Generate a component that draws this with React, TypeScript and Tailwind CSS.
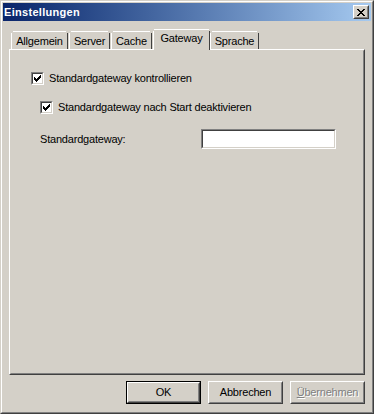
import React from "react";

const font = { fontFamily: '"Liberation Sans", Arial, sans-serif' };

function Check() {
  const px: [number, number][] = [
    [6, 0],
    [5, 1], [6, 1],
    [0, 2], [4, 2], [5, 2], [6, 2],
    [0, 3], [1, 3], [3, 3], [4, 3], [5, 3],
    [0, 4], [1, 4], [2, 4], [3, 4], [4, 4],
    [1, 5], [2, 5], [3, 5],
    [2, 6],
  ];
  return (
    <svg width="7" height="7" viewBox="0 0 7 7" shapeRendering="crispEdges">
      {px.map(([x, y], i) => (
        <rect key={i} x={x} y={y} width="1" height="1" fill="#000" />
      ))}
    </svg>
  );
}

function CheckBox() {
  return (
    <div className="w-[13px] h-[13px] border border-t-[#808080] border-l-[#808080] border-r-white border-b-white shrink-0">
      <div className="w-full h-full border border-t-[#404040] border-l-[#404040] border-r-[#d4d0c8] border-b-[#d4d0c8] bg-white flex items-center justify-center">
        <Check />
      </div>
    </div>
  );
}

function CloseX() {
  const px: [number, number][] = [];
  for (let i = 0; i < 7; i++) {
    px.push([i, i], [i + 1, i], [6 - i, i], [7 - i, i]);
  }
  return (
    <svg width="8" height="7" viewBox="0 0 8 7" shapeRendering="crispEdges">
      {px.map(([x, y], i) => (
        <rect key={i} x={x} y={y} width="1" height="1" fill="#000" />
      ))}
    </svg>
  );
}

function Btn({ children, def }: { children: React.ReactNode; def?: boolean }) {
  return (
    <div className={"w-[75px] h-[23px] " + (def ? "border border-black" : "")}>
      <div className="w-full h-full border border-t-white border-l-white border-r-[#404040] border-b-[#404040]">
        <div className="w-full h-full border border-t-[#d4d0c8] border-l-[#d4d0c8] border-r-[#808080] border-b-[#808080] flex items-center justify-center text-[11px] tracking-[-0.2px]">
          {children}
        </div>
      </div>
    </div>
  );
}

function Tab({ label, selected, w }: { label: string; selected?: boolean; w: string }) {
  if (selected) {
    return (
      <div className={"relative z-10 -mb-[1px] h-[21px] flex " + w}>
        <div className="w-[1px] mt-[2px] bg-white" />
        <div className="flex-1 flex flex-col">
          <div className="h-[1px] bg-white" />
          <div className="flex-1 bg-[#d4d0c8] pt-[2px] text-center text-[11px] leading-[13px] tracking-[-0.2px]">{label}</div>
        </div>
        <div className="w-[1px] mt-[2px] bg-[#404040]" />
      </div>
    );
  }
  return (
    <div className={"h-[18px] flex " + w}>
      <div className="w-[1px] mt-[2px] bg-white" />
      <div className="flex-1 flex flex-col">
        <div className="h-[1px] mx-[1px] bg-white" />
        <div className="flex-1 bg-[#d4d0c8] pt-[3px] text-center text-[11px] leading-[13px] whitespace-nowrap tracking-[-0.2px]">{label}</div>
      </div>
      <div className="w-[1px] mt-[2px] bg-[#404040]" />
      <div className="w-[1px]" />
    </div>
  );
}

export default function App() {
  return (
    <div style={font} className="w-[374px] h-[414px] bg-[#d4d0c8] text-black">
      <div className="w-full h-full border border-t-[#d4d0c8] border-l-[#d4d0c8] border-r-[#404040] border-b-[#404040]">
        <div className="w-full h-full border border-t-white border-l-white border-r-[#808080] border-b-[#808080] p-[1px] flex flex-col">
          {/* title bar */}
          <div className="h-[18px] bg-gradient-to-r from-[#0a246a] to-[#a6caf0] flex items-center pl-[1px] pr-[2px]">
            <span className="text-white font-bold text-[11px] tracking-[0.3px] flex-1">Einstellungen</span>
            <div className="w-[16px] h-[14px] border border-t-white border-l-white border-r-[#404040] border-b-[#404040] bg-[#d4d0c8]">
              <div className="w-full h-full border border-t-[#d4d0c8] border-l-[#d4d0c8] border-r-[#808080] border-b-[#808080] flex items-center justify-center">
                <CloseX />
              </div>
            </div>
          </div>
          {/* body */}
          <div className="flex-1 flex flex-col px-[6px] pt-[8px]">
            <div className="flex items-end h-[20px] pl-[2px]">
              <Tab label="Allgemein" w="w-[58px]" />
              <Tab label="Server" w="w-[42px]" />
              <Tab label="Cache" w="w-[42px]" />
              <Tab label="Gateway" w="w-[57px]" selected />
              <Tab label="Sprache" w="w-[50px]" />
            </div>
            <div className="h-[326px] border border-t-white border-l-white border-r-[#404040] border-b-[#404040]">
              <div className="w-full h-full border border-transparent border-r-[#808080] border-b-[#808080] pt-[21px] pl-[20px] text-[11px] tracking-[-0.2px]">
                <div className="flex items-center gap-[5px] h-[13px]">
                  <CheckBox />
                  <span>Standardgateway kontrollieren</span>
                </div>
                <div className="flex items-center gap-[5px] h-[13px] mt-[16px] ml-[9px]">
                  <CheckBox />
                  <span>Standardgateway nach Start deaktivieren</span>
                </div>
                <div className="flex items-center mt-[15px] ml-[9px]">
                  <span className="w-[161px]">Standardgateway:</span>
                  <div className="w-[135px] h-[20px] border border-t-[#808080] border-l-[#808080] border-r-white border-b-white">
                    <div className="w-full h-full border border-t-[#404040] border-l-[#404040] border-r-[#d4d0c8] border-b-[#d4d0c8] bg-white" />
                  </div>
                </div>
              </div>
            </div>
            <div className="flex justify-end gap-[7px] mt-[6px] pr-[0px]">
              <Btn def>OK</Btn>
              <Btn>Abbrechen</Btn>
              <Btn>
                <span className="text-[#808080] [text-shadow:1px_1px_0_#fff]">
                  <span className="underline">Ü</span>bernehmen
                </span>
              </Btn>
            </div>
          </div>
        </div>
      </div>
    </div>
  );
}
